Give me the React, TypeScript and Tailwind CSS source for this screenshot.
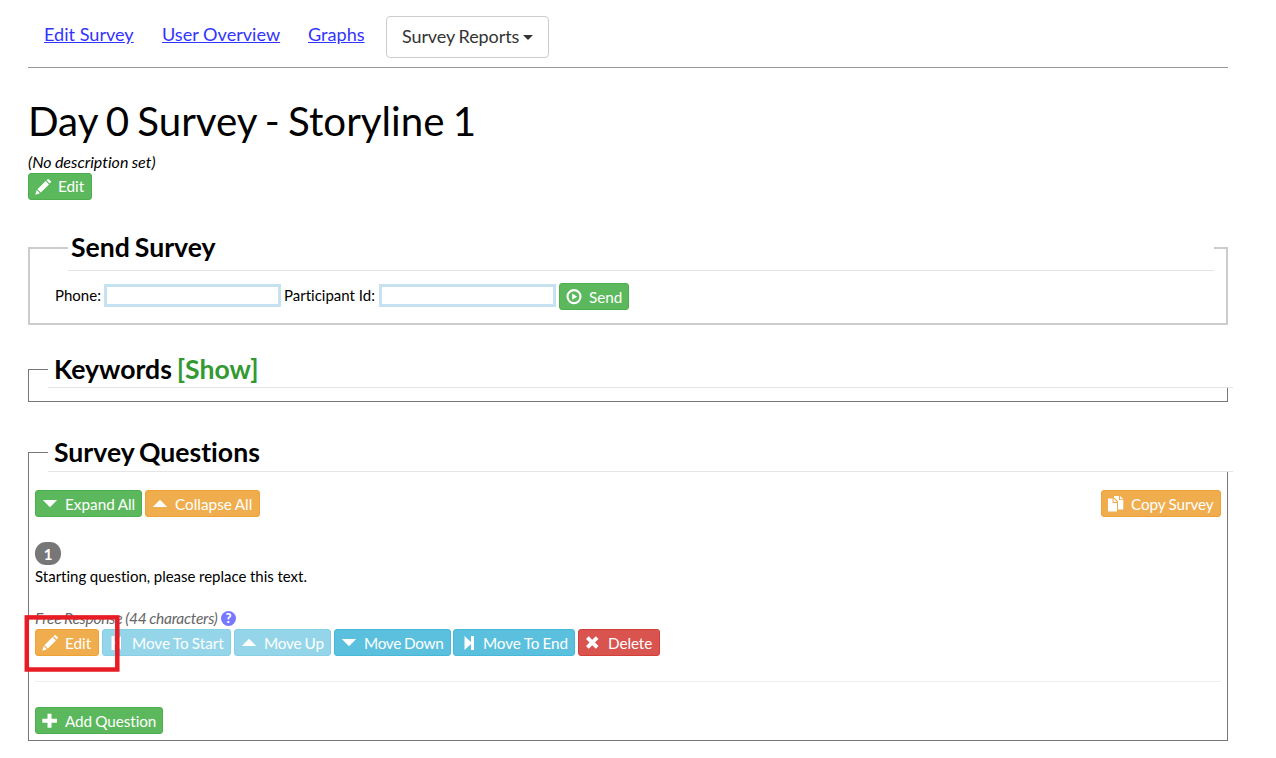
import React from "react";

const tones = {
  green: "bg-[#5cb85c] border-[#4cae4c]",
  orange: "bg-[#f0ad4e] border-[#eea236]",
  blue: "bg-[#5bc0de] border-[#46b8da]",
  faded: "bg-[#5bc0de] border-[#46b8da] opacity-65",
  red: "bg-[#d9534f] border-[#d43f3a]",
};

const shapes = {
  pencil: <path d="M11.4 1.2 12.6.3q.7-.5 1.3.1l1.7 1.7q.6.6.1 1.3l-.9 1.2zM10.6 2l3.4 3.4-8.2 8.2-3.4-3.4zM1.7 11l3.3 3.3L.3 15.7z" />,
  play: (
    <>
      <circle cx="8" cy="7.6" r="6.500" fill="none" stroke="currentColor" strokeWidth="2.100" />
      <path d="M6.200 4.600v6.200l5-3.100z" />
    </>
  ),
  down: <path d="M.8 4h14.400L8 11.200z" />,
  up: <path d="M.8 11h14.400L8 3.800z" />,
  copy: <path d="M0 2.500h4.500V7H9v8.500H0zM5.500 2.500 9 6H5.500zM6 0h5v4h4.300v9.500H10V5.200L6 1.400zM12 0l3.300 3.200H12z" />,
  start: <path d="M2.500 1h3v6L12 1v14L5.500 9v6h-3z" />,
  end: <path d="M4.500 1 11 7V1h3v14h-3V9l-6.500 6z" />,
  remove: <path d="M3.700 1.300 7.250 4.850 10.800 1.300 13.500 4 9.950 7.550 13.500 11.100 10.800 13.800 7.250 10.250 3.700 13.800 1 11.100 4.550 7.550 1 4z" />,
  plus: <path d="M5.500.700h4v5H15v4H9.500v5h-4v-5H.300v-4h5.200z" />,
};

interface BtnProps {
  tone: keyof typeof tones;
  icon: keyof typeof shapes;
  w: string;
  raised?: boolean;
  children: string;
}

function Btn({ tone, icon, w, raised, children }: BtnProps) {
  return (
    <button className={`flex h-[27px] shrink-0 items-center rounded-[3px] border pl-[6px] text-[15.3px] leading-[25px] [word-spacing:-.5px] whitespace-nowrap text-white ${w} ${tones[tone]}`}>
      <svg className="mt-px mr-[7px] size-4 shrink-0" viewBox="0 0 16 16" fill="currentColor">{shapes[icon]}</svg>
      <span className={raised ? "-mt-px" : "pt-px"}>{children}</span>
    </button>
  );
}

export default function App() {
  return (
    <div className="relative h-[758px] w-[1276px] overflow-hidden bg-white pl-7 font-['Lato',sans-serif] text-[15px] leading-5 text-black [font-variant-ligatures:none]">
      <nav className="flex h-[68px] w-[1200px] items-start border-b border-[#999] pl-4 text-[18.1px] text-[#3333ff]">
        <a className="mt-6 w-[118px] underline">Edit Survey</a>
        <a className="mt-6 w-[146px] underline">User Overview</a>
        <a className="mt-6 w-[78px] underline">Graphs</a>
        <button className="mt-4 flex h-[42px] w-[163px] items-center rounded-[4px] border border-[#ccc] pb-0.5 pl-[15px] text-[18px] tracking-[-.1px] [word-spacing:-.6px] whitespace-nowrap text-[#333]">
          Survey Reports
          <svg className="mt-[3px] ml-1" width="10" height="5" viewBox="0 0 10 5" fill="currentColor"><path d="M0 0h10L5 5z" /></svg>
        </button>
      </nav>

      <h1 className="mt-[29px] h-[55px] text-[40.3px] leading-[48px] [word-spacing:-2.1px]">Day 0 Survey - Storyline 1</h1>
      <p className="mb-px h-5 text-[16px] [word-spacing:-.4px] italic">(No description set)</p>
      <Btn tone="green" icon="pencil" w="w-16" raised>Edit</Btn>

      <fieldset className="mt-[25px] h-[100px] w-[1200px] min-w-0 border-2 border-[#ccc] pl-[25px]">
        <legend className="ml-[13px] h-[46px] w-[1146px] border-b border-[#e5e5e5] pl-[3px] text-[26.6px] leading-[44px] font-bold [word-spacing:-1.5px]">Send Survey</legend>
        <div className="flex items-start pt-3">
          <label className="mt-[2px] w-[49px] whitespace-nowrap">Phone:</label>
          <input className="mt-px h-[23px] w-[177px] border-3 border-[#c6e2f0]" />
          <label className="mt-[2px] ml-[3px] w-[95px] whitespace-nowrap">Participant Id:</label>
          <input className="mt-px mr-[3px] h-[23px] w-[177px] border-3 border-[#c6e2f0]" />
          <Btn tone="green" icon="play" w="w-[70px]">Send</Btn>
        </div>
      </fieldset>

      <fieldset className="mt-[26px] h-[51px] w-[1200px] min-w-0 border border-[#777]">
        <legend className="ml-[19px] h-[37px] w-[1185px] border-b border-[#e5e5e5] pl-[6px] text-[26.6px] leading-[37px] font-bold [word-spacing:-1.5px]">
          Keywords <a className="text-[#339933]">[Show]</a>
        </legend>
      </fieldset>

      <fieldset className="mt-[31px] h-[308px] w-[1200px] min-w-0 border border-[#777] pl-[6px]">
        <legend className="ml-[13px] h-[39px] w-[1185px] border-b border-[#e5e5e5] pl-[6px] text-[26.6px] leading-[39px] font-bold [word-spacing:-1.5px]">Survey Questions</legend>
        <div className="flex w-[1186px] gap-[3px] pt-[18px]">
          <Btn tone="green" icon="down" w="w-[107px]">Expand All</Btn>
          <Btn tone="orange" icon="up" w="w-[115px]">Collapse All</Btn>
          <div className="grow" />
          <Btn tone="orange" icon="copy" w="w-[120px] tracking-[-.1px]">Copy Survey</Btn>
        </div>
        <span className="mt-[25px] flex h-[23px] w-[26px] items-center justify-center rounded-[11px] bg-[#777] pt-px text-[15px] font-bold text-white">1</span>
        <p className="mt-px h-[42px] [word-spacing:-.3px]">Starting question, please replace this text.</p>
        <div className="flex h-[21px] items-center gap-[3px] text-[#666]">
          <em className="-mt-0.5 w-[183px] text-[15.5px] tracking-[-.23px] [word-spacing:-.7px] whitespace-nowrap">Free Response (44 characters)</em>
          <span className="flex size-[15px] items-center justify-center rounded-full bg-[#7777ff] text-[13px] leading-[15px] font-black text-white">?</span>
        </div>
        <div className="flex gap-[3px]">
          <Btn tone="orange" icon="pencil" w="w-16">Edit</Btn>
          <Btn tone="faded" icon="start" w="w-[129px] tracking-[-.07px]">Move To Start</Btn>
          <Btn tone="faded" icon="up" w="w-[97px] tracking-[-.2px]">Move Up</Btn>
          <Btn tone="blue" icon="down" w="w-[117px] tracking-[-.3px]">Move Down</Btn>
          <Btn tone="blue" icon="end" w="w-[122px] -ml-px tracking-[-.1px]">Move To End</Btn>
          <Btn tone="red" icon="remove" w="w-[82px] tracking-[-.1px]">Delete</Btn>
        </div>
        <hr className="mt-[25px] mb-[25px] w-[1186px] border-[#eee]" />
        <Btn tone="green" icon="plus" w="w-32 tracking-[-.1px]">Add Question</Btn>
      </fieldset>
      <svg className="absolute top-[614px] left-6" width="97" height="59" fill="none" stroke="#e81c24">
        <rect x="2.800" y="3.400" width="90.500" height="52.100" strokeWidth="4.500" />
      </svg>
    </div>
  );
}
